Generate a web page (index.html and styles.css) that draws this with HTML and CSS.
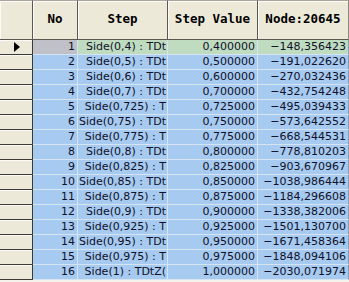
FILE: index.html
```html
<!DOCTYPE html>
<html>
<head>
<meta charset="utf-8">
<link rel="stylesheet" href="styles.css">
</head>
<body>
<div class="grid">
  <div class="hc ind"></div>
  <div class="hc">No</div>
  <div class="hc">Step</div>
  <div class="hc">Step Value</div>
  <div class="hc last">Node:20645</div>

  <div class="ic"><span class="arrow"></span></div>
  <div class="c num sel-gray">1</div>
  <div class="c step sel">Side(0,4) : TDt</div>
  <div class="c val sel">0,400000</div>
  <div class="c val last sel">−148,356423</div>

  <div class="ic"></div><div class="c num">2</div><div class="c step">Side(0,5) : TDt</div><div class="c val">0,500000</div><div class="c val last">−191,022620</div>
  <div class="ic"></div><div class="c num">3</div><div class="c step">Side(0,6) : TDt</div><div class="c val">0,600000</div><div class="c val last">−270,032436</div>
  <div class="ic"></div><div class="c num">4</div><div class="c step">Side(0,7) : TDt</div><div class="c val">0,700000</div><div class="c val last">−432,754248</div>
  <div class="ic"></div><div class="c num">5</div><div class="c step">Side(0,725) : T</div><div class="c val">0,725000</div><div class="c val last">−495,039433</div>
  <div class="ic"></div><div class="c num">6</div><div class="c step">Side(0,75) : TDt</div><div class="c val">0,750000</div><div class="c val last">−573,642552</div>
  <div class="ic"></div><div class="c num">7</div><div class="c step">Side(0,775) : T</div><div class="c val">0,775000</div><div class="c val last">−668,544531</div>
  <div class="ic"></div><div class="c num">8</div><div class="c step">Side(0,8) : TDt</div><div class="c val">0,800000</div><div class="c val last">−778,810203</div>
  <div class="ic"></div><div class="c num">9</div><div class="c step">Side(0,825) : T</div><div class="c val">0,825000</div><div class="c val last">−903,670967</div>
  <div class="ic"></div><div class="c num">10</div><div class="c step">Side(0,85) : TDt</div><div class="c val">0,850000</div><div class="c val last">−1038,986444</div>
  <div class="ic"></div><div class="c num">11</div><div class="c step">Side(0,875) : T</div><div class="c val">0,875000</div><div class="c val last">−1184,296608</div>
  <div class="ic"></div><div class="c num">12</div><div class="c step">Side(0,9) : TDt</div><div class="c val">0,900000</div><div class="c val last">−1338,382006</div>
  <div class="ic"></div><div class="c num">13</div><div class="c step">Side(0,925) : T</div><div class="c val">0,925000</div><div class="c val last">−1501,130700</div>
  <div class="ic"></div><div class="c num">14</div><div class="c step">Side(0,95) : TDt</div><div class="c val">0,950000</div><div class="c val last">−1671,458364</div>
  <div class="ic"></div><div class="c num">15</div><div class="c step">Side(0,975) : T</div><div class="c val">0,975000</div><div class="c val last">−1848,094106</div>
  <div class="ic"></div><div class="c num">16</div><div class="c step">Side(1) : TDtZ(</div><div class="c val">1,000000</div><div class="c val last">−2030,071974</div>
</div>
</body>
</html>
```
FILE: styles.css
```css
html, body {
  margin: 0;
  padding: 0;
  background: #f4f2ea;
}
body {
  width: 349px;
  height: 282px;
  overflow: hidden;
}
.grid {
  display: grid;
  grid-template-columns: 33px 45px 90px 90px 91px;
  grid-template-rows: 40px repeat(16, 15px);
  font-family: "DejaVu Sans", Verdana, sans-serif;
  font-size: 11px;
  color: #101028;
}
.hc {
  box-sizing: border-box;
  background: #ece9d8;
  border-right: 1px solid #5a5850;
  border-bottom: 1px solid #5a5850;
  border-top: 1px solid #a8a69c;
  box-shadow: inset 1px 1px 0 #fbfaf6;
  display: flex;
  align-items: center;
  justify-content: center;
  padding-bottom: 3px;
  font-family: "DejaVu Sans Mono", monospace;
  font-weight: bold;
  font-size: 12.5px;
  color: #000;
}
.hc.last {
  border-right: 1px solid #8a887e;
}
.ic {
  box-sizing: border-box;
  background: #ece9d8;
  border-right: 1px solid #3c3a34;
  border-bottom: 1px solid #3c3a34;
  box-shadow: inset 0 1px 0 #fbfaf6;
  display: flex;
  align-items: center;
  justify-content: center;
}
.arrow {
  width: 0;
  height: 0;
  border-top: 5px solid transparent;
  border-bottom: 5px solid transparent;
  border-left: 6px solid #000;
  margin-left: 2px;
}
.c {
  box-sizing: border-box;
  background: #a6caf0;
  border-right: 1px solid #d6e4f2;
  border-bottom: 1px solid #d6e4f2;
  line-height: 14px;
  white-space: nowrap;
  overflow: hidden;
  text-align: right;
  padding-right: 2px;
}
.c.step {
  padding-right: 1px;
}
.c.last {
  border-right: 1px solid #8a9cb0;
}
.c.sel {
  background: #c0dcc0;
}
.c.sel-gray {
  background: #c0c0c8;
}
```
